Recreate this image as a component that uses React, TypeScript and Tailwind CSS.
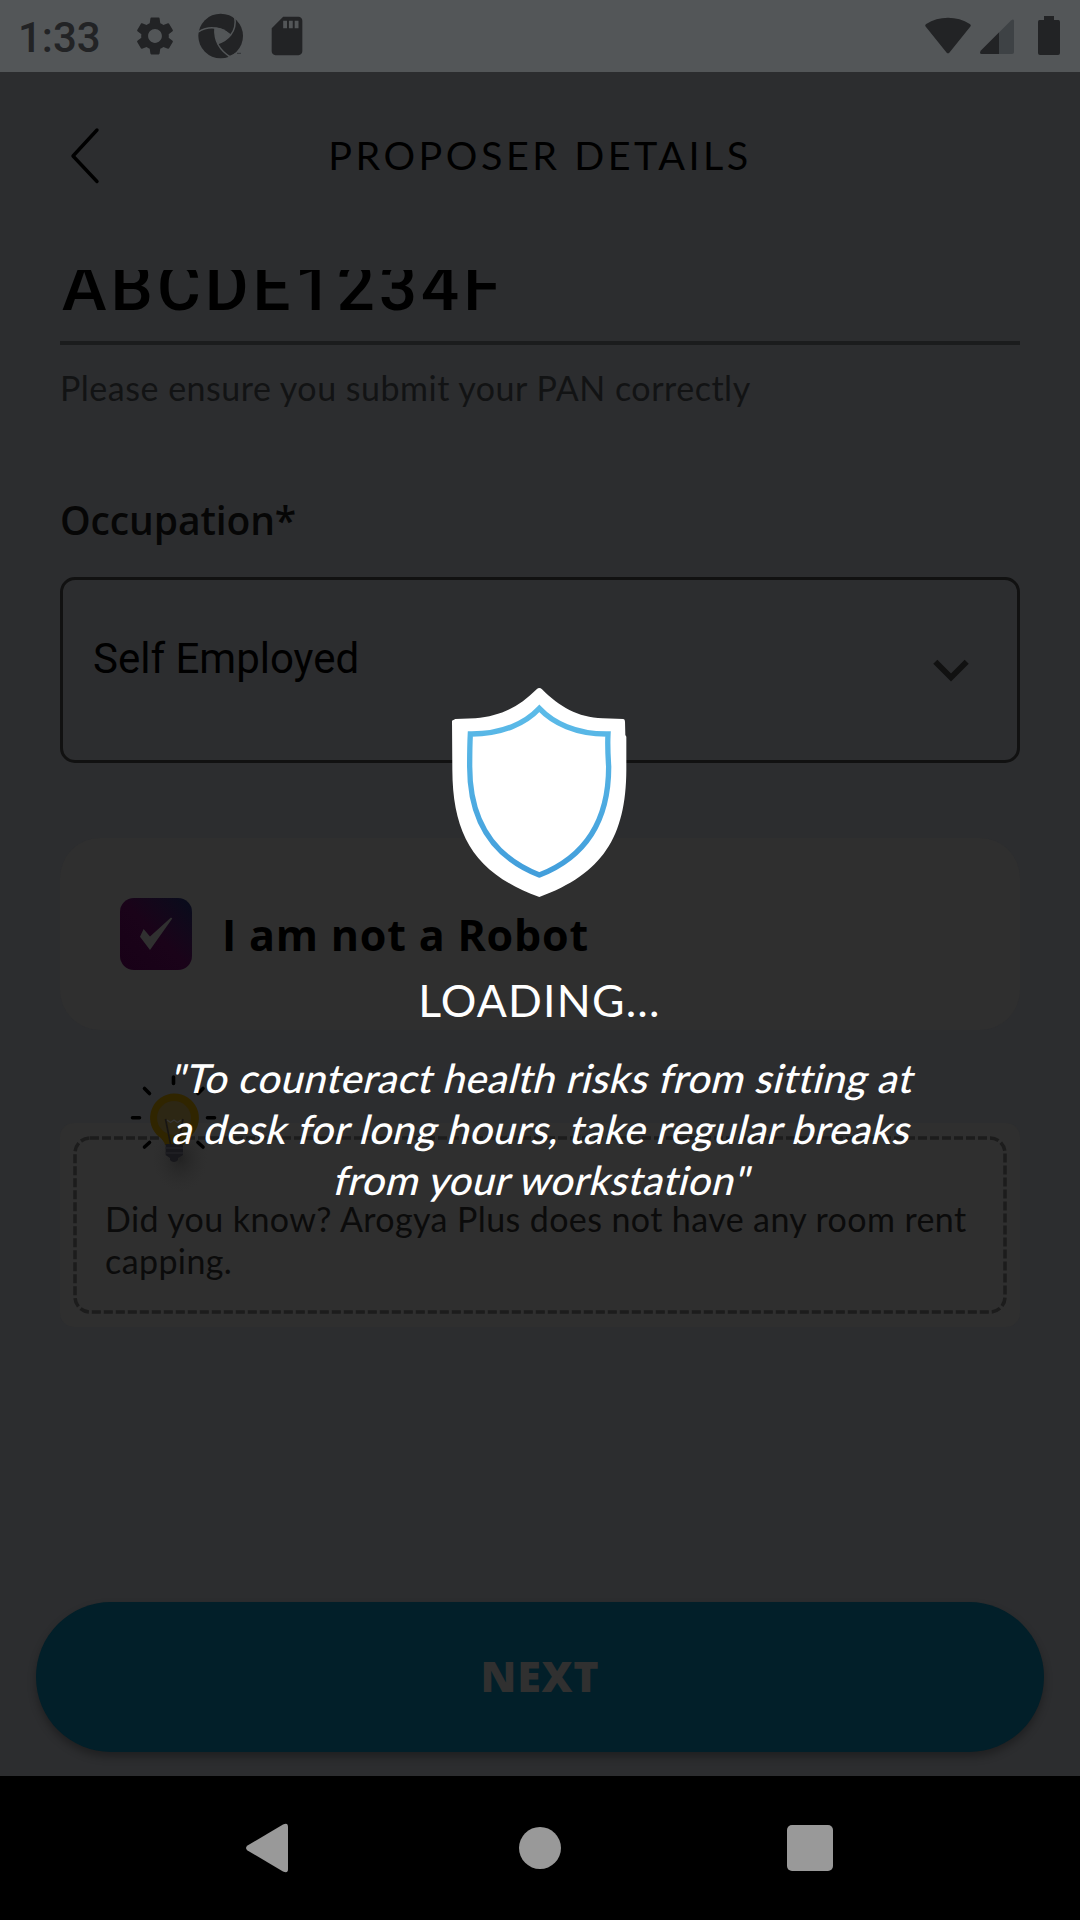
import { MdSdCard, MdSettings } from "react-icons/md";

function ApertureIcon() {
  return (
    <svg className="h-[46px] w-[46px]" viewBox="594 40 138 138" fill="none">
      <circle cx="662" cy="109" r="67" fill="#222325" />
      <path d="M645 84 Q668 82 692 106 Q678 124 653 132 Q641 108 645 84Z" fill="#535658" />
      <g stroke="#535658" strokeWidth="4.5">
        <path d="M594 97 Q642 68 692 106" />
        <path d="M704 50 Q710 84 692 106 Q678 124 652 132" />
        <path d="M645 84 Q640 142 694 174" />
      </g>
      <path d="M683 171 L712 158 L720 172 L690 182Z" fill="#535658" />
      <path d="M712 161h4m2 0h4" stroke="#222325" strokeWidth="3" />
    </svg>
  );
}

function StatusBar() {
  return (
    <header className="flex h-[72px] shrink-0 items-center bg-[#535658] pl-[18px] pr-5 text-[#222325]">
      <span className="w-[113px] pt-[3px] font-['Roboto'] text-[42px] leading-none font-medium">1:33</span>
      <MdSettings className="ml-px size-[46px]" />
      <div className="ml-5">
        <ApertureIcon />
      </div>
      <MdSdCard className="ml-5 size-[46px]" />
      <div className="ml-auto flex items-center">
        <svg className="h-[38px] w-[46px]" viewBox="0 0 46 38">
          <path d="M.6 9.5Q-.4 8 1.2 7Q11 .8 23 .8T44.800 7Q46.400 8 45.400 9.500L24.500 35.500Q23 37.200 21.500 35.500Z" fill="#222325" />
        </svg>
        <svg className="ml-2 h-[38px] w-[36px]" viewBox="0 0 36 38">
          <path d="M32 3.500Q35 1 35 4.500V35Q35 37 33 37H3Q0 37 2 33.500Z" fill="#3e4245" />
          <path d="M20 15.500V37H3Q-.2 36.800 2 33.500Z" fill="#222325" />
        </svg>
        <svg className="ml-[23px] h-[40px] w-[22px]" viewBox="0 0 22 40">
          <path d="M6 0H16V4H20.500Q22 4 22 6V37Q22 39 20 39H2Q0 39 0 37V6Q0 4 1.500 4H6Z" fill="#222325" />
        </svg>
      </div>
    </header>
  );
}

function TitleBar() {
  return (
    <div className="relative mb-[32px] flex h-[166px] shrink-0 items-center justify-center">
      <svg className="absolute top-[54px] left-[68px] h-[60px] w-8" viewBox="0 0 32 60" fill="none">
        <path d="M29 4L5 30L29 55.500" stroke="#000" strokeWidth="3.400" strokeLinecap="round" strokeLinejoin="round" />
      </svg>
      <h1 className="text-[39.500px] leading-[60px] tracking-[3.520px]">PROPOSER DETAILS</h1>
    </div>
  );
}

function LightBulb() {
  return (
    <svg className="absolute top-[-53px] left-[60px] h-[130px] w-[110px]" viewBox="120 1070 110 130" fill="none">
      <defs>
        <radialGradient id="bulbShadow">
          <stop offset="0" stopColor="#1f1f1f" stopOpacity=".8" />
          <stop offset="1" stopColor="#2b2b2b" stopOpacity="0" />
        </radialGradient>
      </defs>
      <ellipse cx="180" cy="1158" rx="28" ry="34" fill="url(#bulbShadow)" />
      <g stroke="#000" strokeWidth="3.600" strokeLinecap="round">
        <path d="M132.500 1117.800H139.500M207.500 1117.800H214.500M173.500 1077V1083.500" />
        <path d="M144.500 1088.500L149.500 1093.500M203 1088.500L198 1093.500M144.500 1147L149.500 1142.500M203 1147L198 1142.500" />
      </g>
      <path d="M174 1093.500a24.500 24.500 0 0 1 18 41.500q-6 5-8 10h-19q-1-5-8-10a24.500 24.500 0 0 1 17-41.500Z" fill="#302500" />
      <circle cx="174" cy="1118" r="17" fill="#2d2714" />
      <path d="M165.500 1119L170.500 1144M183 1119L178.500 1144" stroke="#171514" strokeWidth="1.600" />
      <path d="M167 1120l3.500 2.500 3.500-2.500 3.500 2.500 3.500-2.500" stroke="#353535" strokeWidth="1.400" />
      <path d="M165.700 1144H183V1155L178 1158V1160Q174 1164 170 1160V1158L165.700 1155Z" fill="#17171b" />
      <path d="M165.700 1148H183M165.700 1153H183" stroke="#222226" strokeWidth="1.500" />
    </svg>
  );
}

function TipCard() {
  return (
    <section className="relative mt-[93px] h-[204px] rounded-[14px] bg-[#2f2f2f] pt-[75px] pl-[45px]">
      <svg className="absolute inset-0 h-full w-full" viewBox="0 0 960 204" fill="none">
        <rect x="15" y="15" width="930" height="174" rx="15" stroke="#1c1c1c" strokeWidth="3.500" strokeDasharray="9 3" />
      </svg>
      <LightBulb />
      <p className="relative text-[34px] leading-[42px] tracking-[0.400px] text-[#0b0b0b]">
        Did you know? Arogya Plus does not have any room rent
        <br />
        capping.
      </p>
    </section>
  );
}

function ProposerForm() {
  return (
    <main className="flex flex-col overflow-hidden px-[60px]">
      <div className="-mt-[23px] pl-[2px] font-['Roboto'] text-[67px] leading-[80px] font-medium tracking-[4.100px]">ABCDE1234F</div>
      <div className="mt-[14px] h-[4px] bg-[#1b1c1d]" />
      <p className="mt-[23px] text-[34px] leading-[40px] tracking-[0.510px] text-[#121314]">Please ensure you submit your PAN correctly</p>
      <label className="mt-[88px] font-['Open_Sans'] text-[39px] leading-[48px] font-semibold tracking-[-0.120px] text-[#060606]">Occupation*</label>
      <div className="relative mt-[33px] h-[186px] rounded-[15px] border-[3px] border-[#111] pt-[54px] pl-[30px] font-['Roboto'] text-[42px] leading-[50px]">
        Self Employed
        <svg className="absolute top-[78px] right-[46px] h-[26px] w-[40px]" viewBox="931 658 40 26" fill="none">
          <path d="M935.300 661.800L951 677.500L966.700 661.800" stroke="#111" strokeWidth="5.800" />
        </svg>
      </div>
      <section className="mt-[75px] flex h-[192px] items-center rounded-[40px] bg-[#2f2f2f] pl-[60px]">
        <div className="size-[72px] rounded-[14px] bg-linear-to-tr from-[#180117] via-[#1a0319] to-[#060c1c]">
          <svg viewBox="120 898 72 72">
            <path d="M140 936.700L143.600 929L150 936.500L171 917.500L172.300 918.500L150 950Z" fill="#303030" />
          </svg>
        </div>
        <span className="pt-[2px] pl-[30px] font-['Open_Sans'] text-[43px] leading-[52px] font-bold tracking-[0.800px]">I am not a Robot</span>
      </section>
      <TipCard />
    </main>
  );
}

const quoteLines = [
  '"To counteract health risks from sitting at',
  "a desk for long hours, take regular breaks",
  'from your workstation"',
];

function LoadingOverlay() {
  return (
    <div className="absolute inset-0 flex flex-col items-center pr-px pt-[687px] text-white">
      <svg className="h-[211px] w-[175px] shrink-0" viewBox="68 51 525 633">
        <defs>
          <linearGradient id="shieldStroke" x1="0" y1="0" x2="0" y2="1">
            <stop offset="0" stopColor="#5cbbe8" />
            <stop offset="1" stopColor="#429edb" />
          </linearGradient>
        </defs>
        <path
          fill="#fff"
          d="M322 58Q330 50 338 58C390 110 445 143 520 145L582 147Q587 148 587 155L588 195L591 200V300C590 500 520 612 330 681C140 612 70 500 69 300L68 152L78 147L138 145C215 138 270 110 322 58Z"
        />
        <path
          fill="none"
          stroke="url(#shieldStroke)"
          strokeWidth="16"
          d="M330 115C370 158 440 193 536 192Q534 230 538 290C538 450 470 560 330 615C190 560 121 450 121 290Q121 230 123 192C220 193 290 158 330 115Z"
        />
      </svg>
      <div className="mt-[76px] text-[44.500px] leading-[52px] tracking-[1.200px]">LOADING...</div>
      <p className="mt-[27px] pl-[8px] text-center text-[40px] leading-[51px] font-medium tracking-[0.450px]">
        {quoteLines.map((line) => (
          <span key={line} className="block -skew-x-14">
            {line}
          </span>
        ))}
      </p>
    </div>
  );
}

function NavigationBar() {
  return (
    <nav className="flex h-36 shrink-0 items-center justify-center bg-black pr-[2px]">
      <svg className="h-[50px] w-[44px]" viewBox="0 0 44 50">
        <path d="M38 1.500Q43 -1 43 4V46Q43 51 38 48.500L2.500 27.500Q-.5 25 2.500 22.500Z" fill="#999" />
      </svg>
      <div className="ml-[230px] size-[42px] rounded-full bg-[#999]" />
      <div className="ml-[226px] size-[46px] rounded-[5px] bg-[#999]" />
    </nav>
  );
}

export default function App() {
  return (
    <div className="relative flex h-[1920px] w-[1080px] flex-col overflow-hidden bg-[#2c2d2f] font-['Lato',sans-serif] text-black">
      <StatusBar />
      <TitleBar />
      <ProposerForm />
      <button className="mx-9 mt-auto mb-6 h-[150px] shrink-0 rounded-full bg-[#021f29] pb-[2px] font-['Open_Sans'] text-[43px] font-extrabold tracking-[0.700px] text-[#303030] shadow-[0_5px_9px_rgba(0,0,0,0.300)]">
        NEXT
      </button>
      <NavigationBar />
      <LoadingOverlay />
    </div>
  );
}
